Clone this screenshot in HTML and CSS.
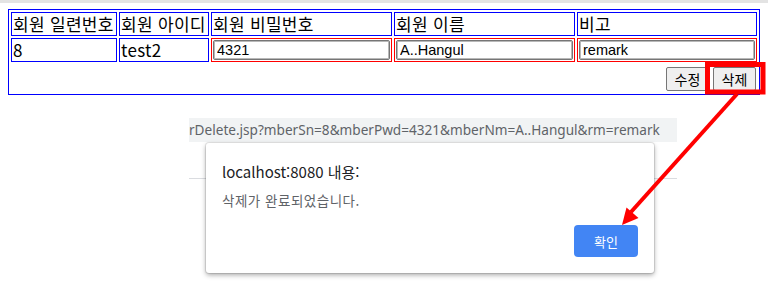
FILE: index.html
```html
<!doctype html>
<html lang="ko">
  <head>
    <meta charset="utf-8">
    <meta name="viewport" content="width=device-width, initial-scale=1" />
    <title>회원 삭제</title>
    <link rel="stylesheet" href="styles.css">
  </head>
  <body>
    <div class="topbar"></div>
    <div class="page">
      <form>
        <table class="member">
          <colgroup>
            <col class="c-sn">
            <col class="c-id">
            <col class="c-pwd">
            <col class="c-nm">
            <col>
          </colgroup>
          <tr>
            <td>회원 일련번호</td>
            <td>회원 아이디</td>
            <td>회원 비밀번호</td>
            <td>회원 이름</td>
            <td>비고</td>
          </tr>
          <tr>
            <td>8</td>
            <td>test2</td>
            <td class="edit"><input type="text" name="mberPwd" value="4321"></td>
            <td class="edit"><input type="text" name="mberNm" value="A..Hangul"></td>
            <td class="edit"><input type="text" name="rm" value="remark"></td>
          </tr>
          <tr>
            <td colspan="5" class="actions">
              <div class="btns">
                <button type="button">수정</button>
                <button type="button">삭제</button>
              </div>
            </td>
          </tr>
        </table>
      </form>

      <div class="browser">
        <div class="urlbar">rDelete.jsp?mberSn=8&amp;mberPwd=4321&amp;mberNm=A..Hangul&amp;rm=remark</div>
        <div class="under"></div>

        <div class="alert">
          <div class="alert-title">localhost:8080 내용:</div>
          <div class="alert-msg">삭제가 완료되었습니다.</div>
          <div class="alert-buttons">
            <button type="button" class="ok">확인</button>
          </div>
        </div>
      </div>
    </div>

    <!-- annotation: box around the delete button, arrow to the OK button -->
    <svg class="marks" width="768" height="299" viewBox="0 0 768 299">
      <rect x="707.5" y="64.5" width="55.5" height="27.5" fill="none" stroke="#ff0000" stroke-width="5"/>
      <line x1="737" y1="94" x2="631" y2="212" stroke="#ff0000" stroke-width="4"/>
      <polygon points="622,225 638.5,218 626.5,207.5" fill="#ff0000"/>
    </svg>
  </body>
</html>
```

FILE: styles.css
```css
*, *::before, *::after {
    box-sizing: border-box;
}

html,
body {
    margin: 0;
    min-height: 299px;
}

body {
    background: #fff;
    font-family: "Noto Sans CJK KR", "Noto Sans", sans-serif;
    color: #000;
}

.topbar {
    height: 3px;
    background: #e3e3e3;
}

.page {
    padding: 6px 8px 0;
}

/* member table */
.member {
    width: 752px;
    table-layout: fixed;
    border: 1px solid #0000ff;
    border-spacing: 2px;
}

.c-sn { width: 106px; }
.c-id { width: 90px; }
.c-pwd { width: 181px; }
.c-nm { width: 181px; }

.member td {
    border: 1px solid #0000ff;
    padding: 1px;
    height: 24px;
    font-size: 17px;
    line-height: 20px;
    letter-spacing: 0.3px;
    white-space: nowrap;
    overflow: hidden;
}

.member td.edit {
    border-color: #ff0000;
}

.member input {
    display: block;
    width: 100%;
    height: 20px;
    margin: 0;
    padding: 0 3px;
    border: 1px solid #767676;
    box-shadow: inset 0 0 0 1px #b8b8b8;
    border-radius: 2px;
    font-family: "Liberation Sans", Arial, sans-serif;
    font-size: 14.5px;
    letter-spacing: 0;
    color: #000;
}

.member td.actions {
    border: none;
    height: 28px;
    padding: 2px 1px 1px;
    letter-spacing: 0;
}

.btns {
    display: flex;
    justify-content: flex-end;
    gap: 4px;
}

.btns button {
    width: 43px;
    height: 24px;
    margin: 0;
    padding: 0;
    background: #efefef;
    border: 1px solid #767676;
    border-radius: 2px;
    font-family: "Noto Sans CJK KR", sans-serif;
    font-size: 14px;
    line-height: 20px;
    color: #000;
}

/* browser alert */
.browser {
    position: relative;
    width: 488px;
    margin: 23px 0 0 181px;
}

.urlbar {
    height: 24px;
    background: #f1f3f4;
    color: #5f6368;
    font-family: "Noto Sans", sans-serif;
    font-size: 13.6px;
    line-height: 24px;
    white-space: nowrap;
    overflow: hidden;
}

.under {
    height: 37px;
    border-bottom: 1px solid #dadce0;
}

.alert {
    position: absolute;
    z-index: 1;
    top: 25px;
    left: 17px;
    width: 448px;
    height: 130px;
    padding: 20px 16px 16px;
    background: #fff;
    border-radius: 3px;
    box-shadow: 0 0 0 1px rgba(0, 0, 0, .09), 0 2px 5px rgba(0, 0, 0, .35);
}

.alert-title {
    font-size: 15px;
    line-height: 18px;
    color: #202124;
}

.alert-msg {
    margin-top: 11px;
    font-size: 13.5px;
    line-height: 16px;
    letter-spacing: 0.5px;
    color: #5f6368;
}

.alert-buttons {
    display: flex;
    justify-content: flex-end;
    margin-top: 17px;
}

.ok {
    width: 64px;
    height: 32px;
    border: none;
    border-radius: 4px;
    background: #4285f4;
    color: #fff;
    font-family: "Noto Sans CJK KR", sans-serif;
    font-size: 13px;
}

.marks {
    position: absolute;
    z-index: 2;
    top: 0;
    left: 0;
    pointer-events: none;
}
```
